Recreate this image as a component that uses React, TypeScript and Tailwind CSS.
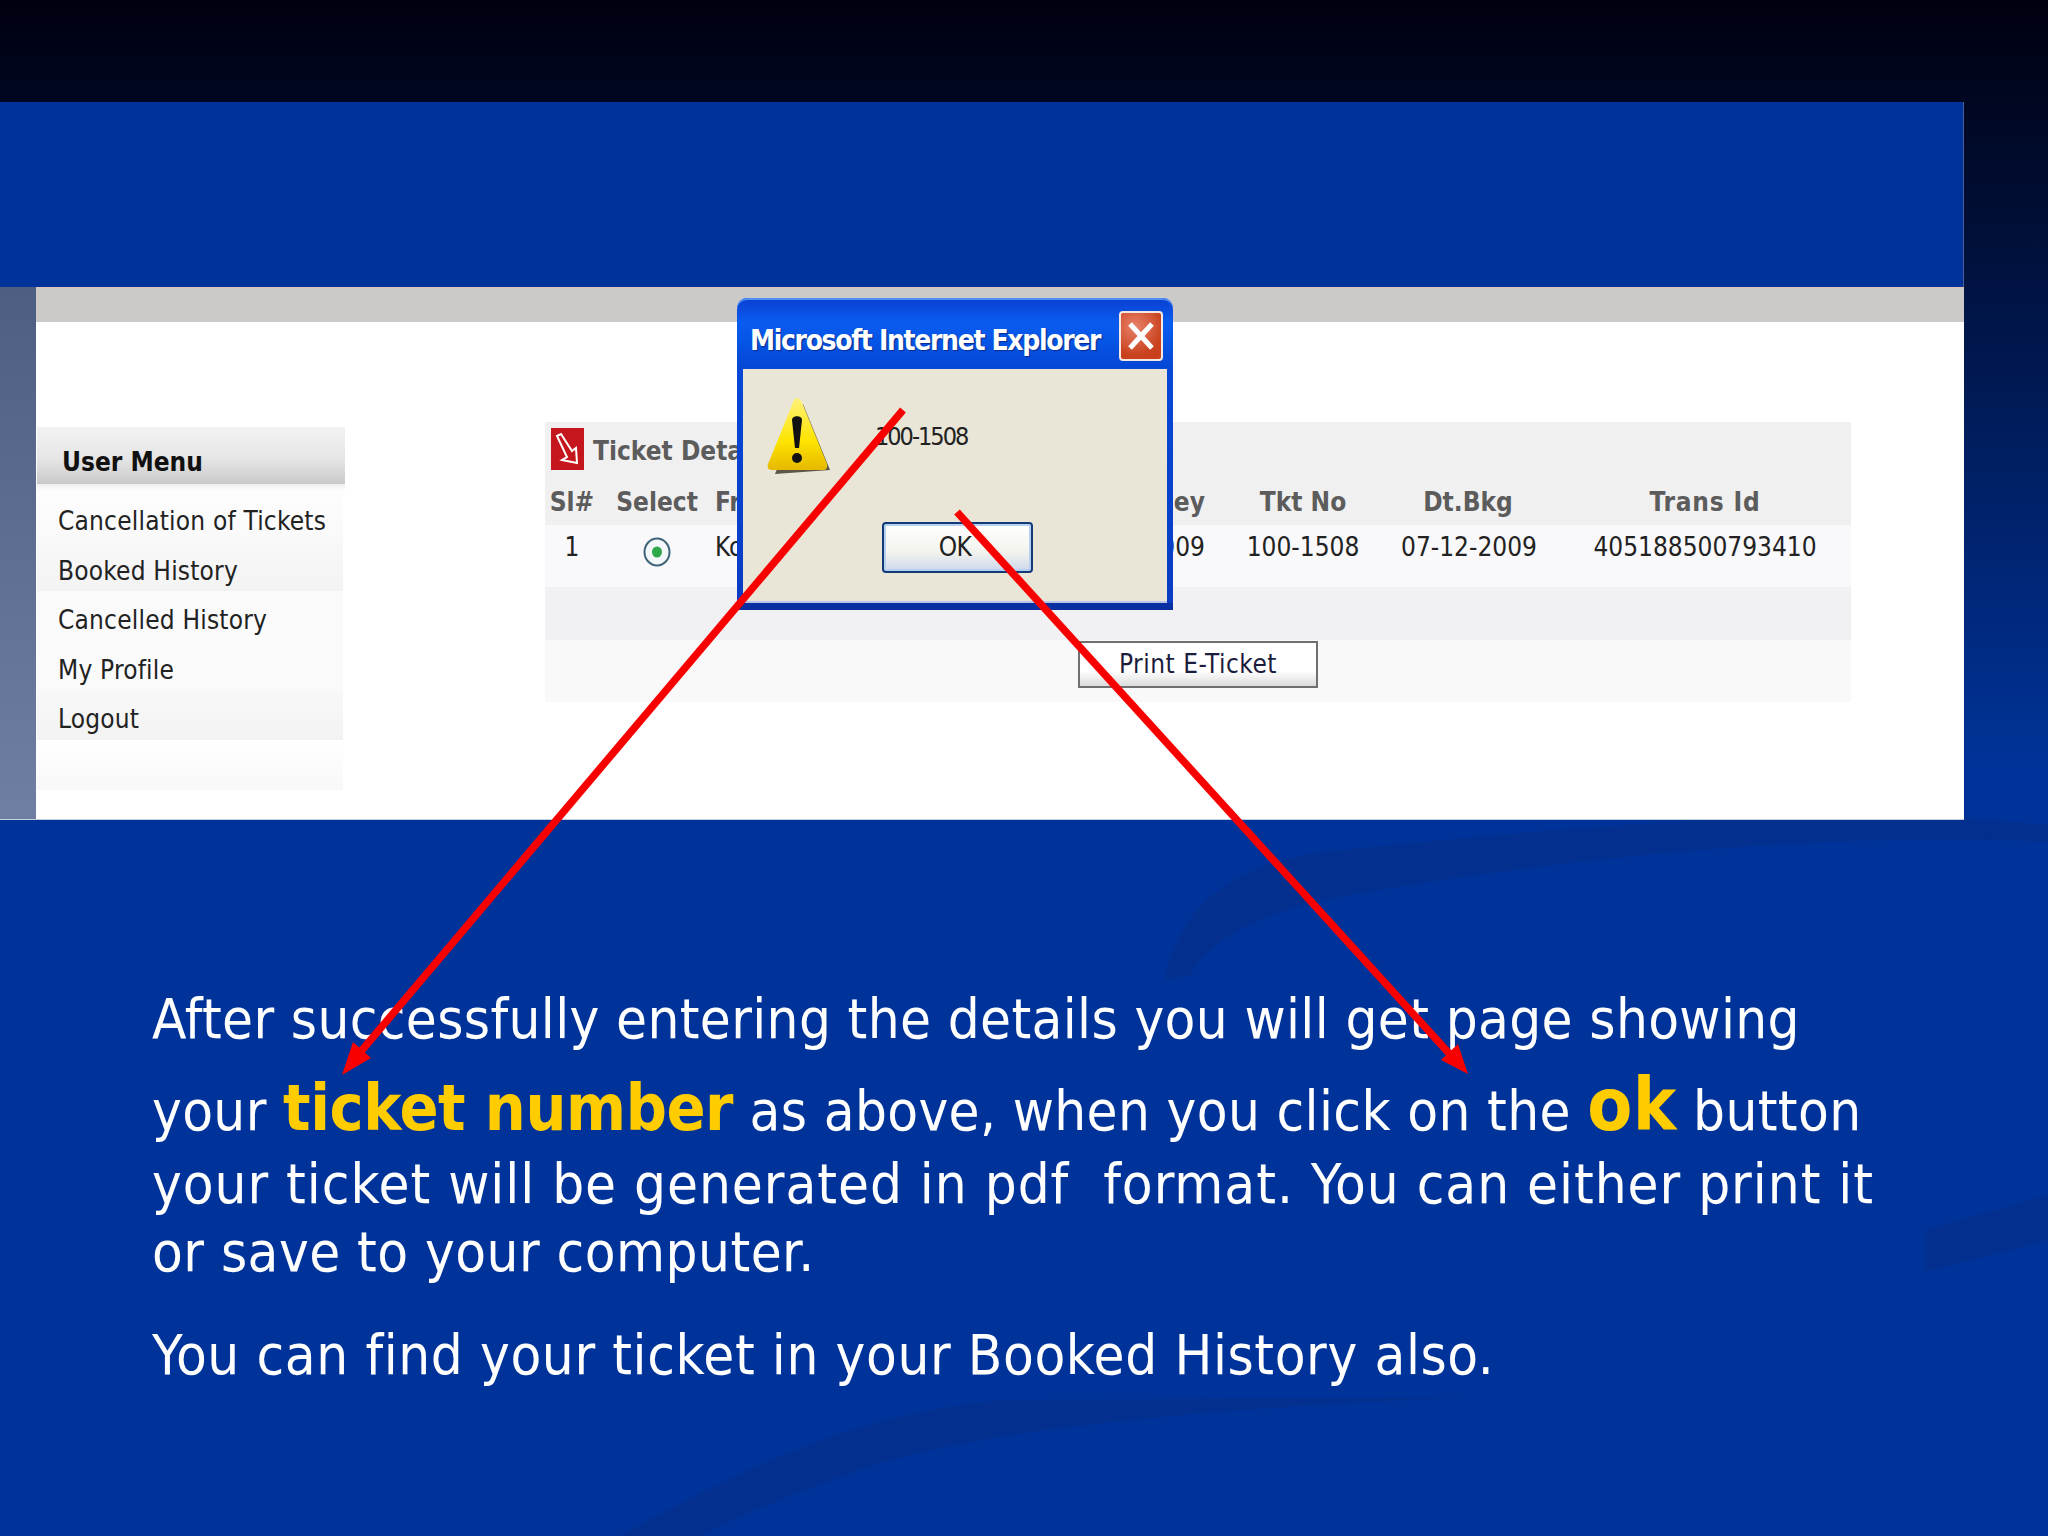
import React from 'react';

const menuItems = [
  { label: 'Cancellation of Tickets', bg: 'bg-[linear-gradient(180deg,#fdfdfd,#f9f9f9)]' },
  { label: 'Booked History', bg: 'bg-[linear-gradient(180deg,#f8f8f8,#f3f3f3)]' },
  { label: 'Cancelled History', bg: 'bg-[#fafafa]' },
  { label: 'My Profile', bg: 'bg-[#fafafa]' },
  { label: 'Logout', bg: 'bg-[linear-gradient(180deg,#f8f8f8,#f3f3f3)]' },
];

const columns = 'grid grid-cols-[54px_116px_285px_205px_196px_134px_316px] items-center';
const headCell = "font-['DejaVu_Sans_Condensed','DejaVu_Sans',sans-serif] text-[26px] font-bold text-[#5c5c5c] whitespace-nowrap";
const valueCell = "font-['DejaVu_Sans_Condensed','DejaVu_Sans',sans-serif] text-[26px] text-[#222] whitespace-nowrap";

const WarningIcon = () => (
  <svg width="64" height="78" viewBox="0 0 64 78" className="absolute left-[24px] top-[29px]">
    <defs>
      <linearGradient id="warn" x1="0" y1="0" x2="0" y2="1">
        <stop offset="0" stopColor="#fff27a" />
        <stop offset="0.6" stopColor="#fde400" />
        <stop offset="1" stopColor="#e6b800" />
      </linearGradient>
    </defs>
    <path d="M36 6 L63 72 L8 76 Z" fill="#5a5648" />
    <path d="M30 0 C33 0 35 4 36 7 L60 66 C61 70 59 72 56 72 L5 72 C1 72 0 69 1 66 L25 7 C26 3 28 0 30 0 Z" fill="url(#warn)" />
    <path d="M25 22 C25 17 35 17 35 22 L32 50 L28 50 Z" fill="#111" />
    <circle cx="30" cy="60" r="5" fill="#111" />
  </svg>
);

const Dialog = () => (
  <div className="absolute left-[737px] top-[298px] w-[436px] h-[312px] rounded-t-[10px] bg-[linear-gradient(180deg,#0a3fd0_0%,#0a5cf0_8%,#0555e6_14%,#0648d6_22%,#0a3cc4_100%)] border-b-[7px] border-b-[#0a2fa0] px-[6px] shadow-[inset_0_2px_0_#4f8df5]">
    <div className="flex items-center justify-between h-[71px] pl-[7px] pr-[4px] pt-[5px]">
      <span className="mt-[9px] font-['DejaVu_Sans_Condensed','DejaVu_Sans',sans-serif] font-bold text-[28px] tracking-[-1.35px] text-white whitespace-nowrap [text-shadow:1px_1px_1px_#0a2a8a]">
        Microsoft Internet Explorer
      </span>
      <div className="flex shrink-0 items-center justify-center w-[44px] h-[50px] rounded-[4px] border-2 border-[#f4e8e2] bg-[radial-gradient(circle_at_35%_30%,#e8826a,#c8401c_70%)]">
        <svg width="28" height="30" viewBox="0 0 28 30">
          <path d="M3 3 L25 27 M25 3 L3 27" stroke="#fff" strokeWidth="5" />
        </svg>
      </div>
    </div>
    <div className="relative h-[234px] bg-[#e9e6d8] border-b-2 border-b-[#b8c4e8]">
      <WarningIcon />
      <p className="absolute left-[132px] top-[50px] font-['DejaVu_Sans_Condensed','DejaVu_Sans',sans-serif] text-[25px] leading-[36px] tracking-[-2px] text-[#222]">
        100-1508
      </p>
      <button className="absolute left-[139px] top-[153px] w-[151px] h-[51px] pr-[5px] rounded-[4px] border-2 border-[#123a78] bg-[linear-gradient(180deg,#ffffff_0%,#f3f3ee_60%,#cdd8ee_100%)] shadow-[inset_0_0_0_2px_#b8d0f0] font-['DejaVu_Sans_Condensed','DejaVu_Sans',sans-serif] text-[26px] tracking-[-0.5px] text-[#222]">
        OK
      </button>
    </div>
  </div>
);

const Arrows = () => (
  <svg width="2048" height="1536" viewBox="0 0 2048 1536" className="absolute left-0 top-0">
    <line x1="903" y1="410" x2="352" y2="1062" stroke="#f80000" strokeWidth="7.5" />
    <path d="M342 1075 L353 1042 L371 1058 Z" fill="#f80000" />
    <line x1="957" y1="512" x2="1456" y2="1061" stroke="#f80000" strokeWidth="7.5" />
    <path d="M1468 1074 L1441 1060 L1458 1044 Z" fill="#f80000" />
  </svg>
);

const Swooshes = () => (
  <svg width="2048" height="1536" viewBox="0 0 2048 1536" className="absolute left-0 top-0" fill="#03308f">
    <path d="M1165 980 C1180 900 1240 860 1340 850 C1500 835 1800 800 2048 825 L2048 842 C1800 830 1520 865 1350 895 C1260 912 1215 935 1190 975 Z" />
    <path d="M1925 1230 L2048 1195 L2048 1240 L1925 1272 Z" />
    <path d="M620 1536 C740 1470 850 1415 1000 1400 L1470 1397 C1300 1405 1000 1420 860 1470 C790 1495 740 1515 700 1536 Z" />
  </svg>
);

export default function App() {
  return (
    <div className="relative w-[2048px] h-[1536px] overflow-hidden bg-[linear-gradient(180deg,#00000f_0%,#003399_50%)]">
      <Swooshes />

      {/* pasted browser screenshot */}
      <div className="relative pt-[102px] w-[1964px]">
        <div className="h-[185px] bg-[#003399] border-r border-r-[#4b5f9a]" />
        <div className="flex h-[533px] border-b border-b-[#c5cede]">
          <div className="w-[36px] bg-[linear-gradient(180deg,#4d5e82,#6f7fa3)]" />
          <div className="flex-1 flex flex-col bg-white">
            <div className="h-[35px] bg-[#cbcac8] border-t border-t-[#e0c4b4]" />
            <div className="flex items-start pt-[100px]">
              <div className="w-[308px] ml-px mt-[5px]">
                <div className="h-[57px] flex items-center pl-[25px] pt-[13px] bg-[linear-gradient(180deg,#f2f2f2_0%,#e6e6e6_55%,#c9c9c9_100%)] font-['DejaVu_Sans_Condensed','DejaVu_Sans',sans-serif] font-bold text-[26px] text-[#111]">
                  User Menu
                </div>
                <div className="h-[8px] bg-[linear-gradient(180deg,#efefef,#ffffff)]" />
                {menuItems.map((item) => (
                  <div key={item.label} className={`h-[49.5px] mr-[2px] flex items-center pl-[21px] pt-[10px] tracking-[0.2px] font-['DejaVu_Sans_Condensed','DejaVu_Sans',sans-serif] text-[26px] text-[#222] whitespace-nowrap ${item.bg}`}>
                    {item.label}
                  </div>
                ))}
                <div className="h-[50px] mr-[2px] bg-[linear-gradient(180deg,#ffffff,#f8f8f8)]" />
              </div>

              <div className="w-[1306px] ml-[200px]">
                <div className="bg-[#f0f0f0] h-[103px]">
                  <div className="flex items-center gap-[9px] h-[56px] pl-[6px] pb-[3px]">
                    <div className="flex items-center justify-center w-[33px] h-[42px] bg-[#c4161c]">
                      <svg width="27" height="34" viewBox="0 0 27 34" fill="none" stroke="#fff" strokeWidth="2">
                        <path d="M3 4 L7 2 L18 19 L22 16 L23 31 L8 28 L13 25 Z" />
                      </svg>
                    </div>
                    <span className={`${headCell} mt-[5px]`}>Ticket Details</span>
                  </div>
                  <div className={`${columns} h-[47px] pt-[2px]`}>
                    <span className={`${headCell} text-center`}>Sl#</span>
                    <span className={`${headCell} text-center`}>Select</span>
                    <span className={headCell}>From</span>
                    <span className={`${headCell} text-right`}>Journey</span>
                    <span className={`${headCell} text-center`}>Tkt No</span>
                    <span className={`${headCell} text-center`}>Dt.Bkg</span>
                    <span className={`${headCell} text-center pl-[24px] tracking-[0.8px]`}>Trans Id</span>
                  </div>
                </div>
                <div className={`${columns} h-[62px] bg-[#f9f9fb] pb-[18px]`}>
                  <span className={`${valueCell} text-center`}>1</span>
                  <span className="flex justify-center pt-[10px]">
                    <svg width="28" height="30" viewBox="0 0 28 30">
                      <ellipse cx="14" cy="15" rx="12.5" ry="13.5" fill="#f4f7fa" stroke="#3f6478" strokeWidth="2" />
                      <ellipse cx="14" cy="15" rx="5" ry="5.5" fill="#2fa84a" />
                    </svg>
                  </span>
                  <span className={valueCell}>Kolkata</span>
                  <span className={`${valueCell} text-right`}>07-12-2009</span>
                  <span className={`${valueCell} text-center`}>100-1508</span>
                  <span className={`${valueCell} text-center`}>07-12-2009</span>
                  <span className={`${valueCell} text-center pl-[24px]`}>405188500793410</span>
                </div>
                <div className="h-[53px] bg-[#f1f1f3]" />
                <div className="h-[62px] bg-[#f9f9f9] flex items-start pl-[533px] pt-px">
                  <button className="w-[240px] h-[47px] border-2 border-[#707070] tracking-[0.5px] bg-[linear-gradient(180deg,#ffffff_0%,#ffffff_65%,#dcdcdc_100%)] font-['DejaVu_Sans_Condensed','DejaVu_Sans',sans-serif] text-[26px] text-[#1c1c3c]">
                    Print E-Ticket
                  </button>
                </div>
              </div>
            </div>
          </div>
        </div>
        <Dialog />
      </div>

      {/* slide text */}
      <div className="relative pl-[152px] pt-[164px] text-white font-['DejaVu_Sans_Condensed','DejaVu_Sans',sans-serif] text-[56px] tracking-[0.36px] leading-[70px] whitespace-pre">
        <p>After successfully entering the details you will get page showing</p>
        <p className="mt-[22px]">
          your <span className="text-[#ffcc00] font-bold text-[64px] tracking-[-0.4px] leading-[0px]">ticket number</span> as above, when you click on the{' '}
          <span className="text-[#ffcc00] font-bold text-[73px] leading-[0px]">ok</span> button
        </p>
        <p className="mt-[3px] tracking-[0.96px]">your ticket will be generated in pdf  format. You can either print it</p>
        <p className="mt-[-2px] tracking-[0.46px]">or save to your computer.</p>
        <p className="mt-[33px] tracking-[0.6px]">You can find your ticket in your Booked History also.</p>
      </div>

      <Arrows />
    </div>
  );
}
